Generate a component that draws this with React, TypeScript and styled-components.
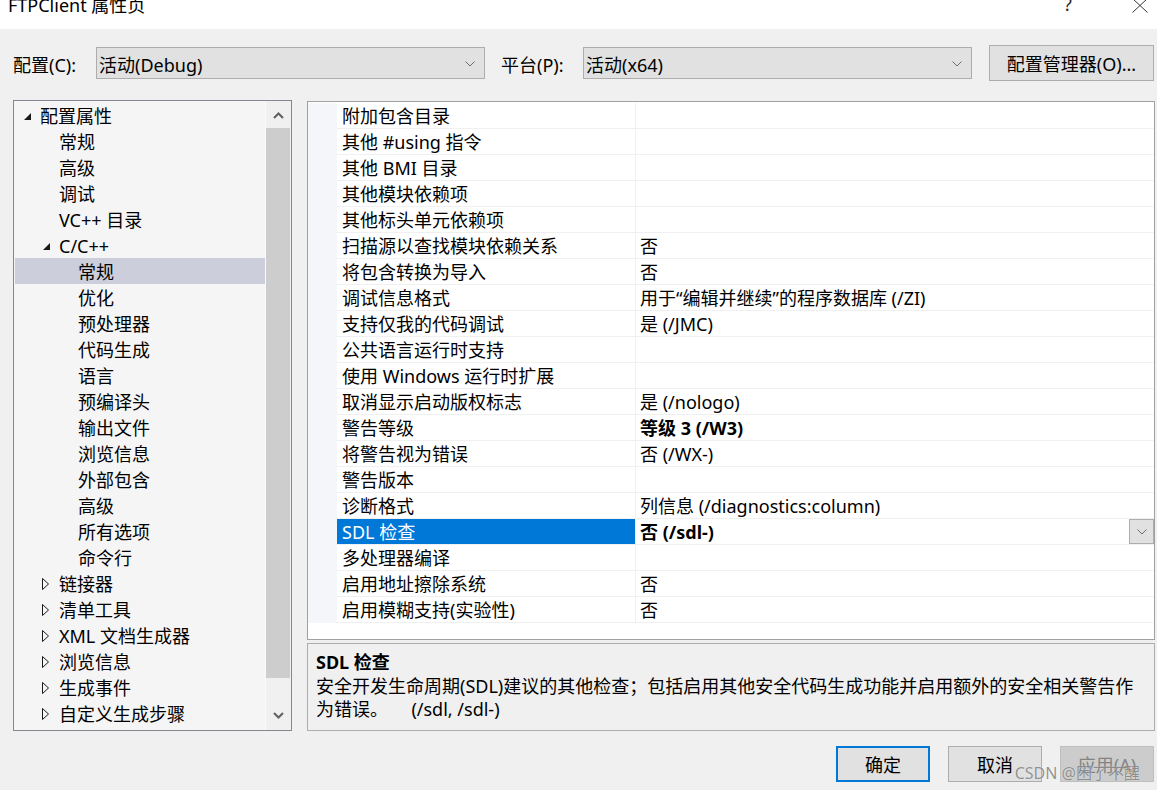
import React from 'react';
import styled, { createGlobalStyle } from 'styled-components';

const FONT = `"Noto Sans", "Noto Sans CJK SC", sans-serif`;

const Global = createGlobalStyle`
  html, body { margin: 0; padding: 0; background: #f0f0f0; }
  body { font-family: ${FONT}; font-size: 18px; color: #000; }
  * { box-sizing: border-box; }
`;

const Window = styled.div`
  position: relative;
  width: 1157px;
  height: 790px;
  overflow: hidden;
  background: #f0f0f0;
  display: flex;
  flex-direction: column;
`;

const TitleBar = styled.div`
  height: 29px;
  flex: none;
  background: #fff;
  display: flex;
  align-items: flex-start;
  padding-left: 8px;
  overflow: hidden;
`;

const Title = styled.div`
  flex: 1;
  font-size: 18px;
  line-height: 18px;
  margin-top: -4px;
  white-space: nowrap;
`;

const HelpGlyph = styled.div`
  font-size: 18px;
  line-height: 18px;
  margin-top: -5px;
  width: 12px;
  color: #222;
`;

const CloseGlyph = styled.div`
  margin-left: 56px;
  margin-right: 9px;
  margin-top: -2px;
  display: flex;
`;

const Content = styled.div`
  flex: 1;
  display: flex;
  flex-direction: column;
  padding: 0 2px 0 13px;
`;

const ConfigRow = styled.div`
  margin-top: 16px;
  height: 36px;
  display: flex;
  align-items: center;
`;

const Label = styled.div<{ $w: number; $ml?: number }>`
  width: ${p => p.$w}px;
  margin-left: ${p => p.$ml ?? 0}px;
  white-space: nowrap;
  flex: none;
  padding-top: 2px;
`;

const Combo = styled.div`
  width: 389px;
  height: 32px;
  flex: none;
  border: 1px solid #adadad;
  background: #e1e1e1;
  display: flex;
  align-items: center;
  padding-left: 2px;
  padding-top: 1px;
  white-space: nowrap;
`;

const ComboChevron = styled.span`
  margin-left: auto;
  margin-right: 9px;
  display: flex;
`;

const PushButton = styled.div<{ $w: number; $h: number; $default?: boolean; $disabled?: boolean }>`
  width: ${p => p.$w}px;
  height: ${p => p.$h}px;
  flex: none;
  display: flex;
  align-items: center;
  justify-content: center;
  white-space: nowrap;
  background: ${p => (p.$disabled ? '#cccccc' : '#e1e1e1')};
  border: ${p => (p.$default ? '2px solid #0078d7' : p.$disabled ? '1px solid #bfbfbf' : '1px solid #adadad')};
  color: ${p => (p.$disabled ? '#838383' : '#000')};
`;

const ManagerButton = styled(PushButton)`
  margin-left: 17px;
`;

const Main = styled.div`
  margin-top: 19px;
  height: 631px;
  display: flex;
  gap: 15px;
`;

const Tree = styled.div`
  width: 279px;
  flex: none;
  border: 1px solid #828790;
  background: #f5f5f5;
  display: flex;
`;

const TreeList = styled.div`
  flex: 1;
  padding: 1px 0 0 1px;
  overflow: hidden;
`;

const TreeRow = styled.div<{ $level: number; $selected?: boolean }>`
  height: 26px;
  display: flex;
  align-items: center;
  padding-left: ${p => 6 + 19 * p.$level}px;
  padding-top: 2px;
  background: ${p => (p.$selected ? '#cccedb' : 'transparent')};
  white-space: nowrap;
  line-height: 24px;
`;

const Expander = styled.span`
  width: 19px;
  flex: none;
  display: flex;
  align-items: center;
  padding-left: 2px;
`;

const ScrollBar = styled.div`
  width: 26px;
  flex: none;
  border-left: 1px solid #fafafa;
  background: #f0f0f0;
  display: flex;
  flex-direction: column;
`;

const ScrollArrow = styled.div<{ $h: number; $align: string }>`
  height: ${p => p.$h}px;
  flex: none;
  display: flex;
  justify-content: center;
  align-items: ${p => p.$align};
  padding: 11px 1px 10px 0;
`;

const ScrollThumb = styled.div`
  height: 550px;
  flex: none;
  background: #cdcdcd;
  margin-right: 1px;
`;

const RightColumn = styled.div`
  flex: 1;
  display: flex;
  flex-direction: column;
  gap: 3px;
`;

const Grid = styled.div`
  height: 539px;
  margin-top: 1px;
  border: 1px solid #a0a0a0;
  background: #fff;
  padding-top: 1px;
  overflow: hidden;
`;

const GridRow = styled.div`
  height: 26px;
  display: grid;
  grid-template-columns: 29px 299px 1fr;
`;

const MarginCell = styled.div`
  background: #f5f6f9;
`;

const NameCell = styled.div<{ $selected?: boolean }>`
  border-bottom: 1px solid #f0f0f0;
  border-right: 1px solid #f0f0f0;
  padding-left: 5px;
  padding-top: 2px;
  line-height: 23px;
  white-space: nowrap;
  overflow: hidden;
  background: ${p => (p.$selected ? '#0078d7' : 'transparent')};
  color: ${p => (p.$selected ? '#fff' : '#000')};
`;

const ValueCell = styled.div<{ $bold?: boolean }>`
  border-bottom: 1px solid #f0f0f0;
  padding-left: 4px;
  white-space: nowrap;
  display: flex;
  align-items: stretch;
  font-weight: ${p => (p.$bold ? 700 : 400)};
`;

const ValueText = styled.span`
  padding-top: 2px;
  line-height: 23px;
`;

const DropButton = styled.div`
  margin-left: auto;
  width: 25px;
  height: 25px;
  border: 1px solid #adadad;
  background: #e1e1e1;
  display: flex;
  align-items: center;
  justify-content: center;
`;

const Description = styled.div`
  height: 88px;
  border: 1px solid #adadad;
  background: #f0f0f0;
  padding: 5px 8px 0 8px;
`;

const DescTitle = styled.div`
  font-weight: 700;
  line-height: 26px;
`;

const DescLine = styled.div`
  line-height: 23px;
  white-space: pre;
`;

const ButtonRow = styled.div`
  margin-top: 15px;
  display: flex;
  justify-content: flex-end;
  gap: 18px;
  padding-right: 1px;
`;

const Watermark = styled.div`
  position: absolute;
  right: 17px;
  bottom: 7px;
  font-size: 16px;
  line-height: 20px;
  color: rgba(110, 110, 110, 0.75);
  text-shadow: 0 0 1px rgba(255, 255, 255, 0.8);
  white-space: nowrap;
  pointer-events: none;
`;

const SmallChevron = () => (
  <svg width="10" height="6" viewBox="0 0 10 6">
    <polyline points="0.5,0.5 5,5 9.5,0.5" fill="none" stroke="#6d6d6d" strokeWidth="1" />
  </svg>
);

const ExpandedTri = () => (
  <svg width="9" height="9" viewBox="0 0 9 9">
    <polygon points="8,1 8,8 1,8" fill="#1a1a1a" />
  </svg>
);

const CollapsedTri = () => (
  <svg width="8" height="12" viewBox="0 0 8 12">
    <polygon points="0.5,0.5 6.5,6 0.5,11.5" fill="none" stroke="#1a1a1a" strokeWidth="1" />
  </svg>
);

const ScrollChevron = ({ up }: { up?: boolean }) => (
  <svg width="11" height="7" viewBox="0 0 11 7">
    <polyline
      points={up ? '1,6 5.5,1.5 10,6' : '1,1 5.5,5.5 10,1'}
      fill="none"
      stroke="#606060"
      strokeWidth="2"
    />
  </svg>
);

type TreeItem = { label: string; level: number; exp?: 'open' | 'closed'; selected?: boolean };

const treeItems: TreeItem[] = [
  { label: '配置属性', level: 0, exp: 'open' },
  { label: '常规', level: 1 },
  { label: '高级', level: 1 },
  { label: '调试', level: 1 },
  { label: 'VC++ 目录', level: 1 },
  { label: 'C/C++', level: 1, exp: 'open' },
  { label: '常规', level: 2, selected: true },
  { label: '优化', level: 2 },
  { label: '预处理器', level: 2 },
  { label: '代码生成', level: 2 },
  { label: '语言', level: 2 },
  { label: '预编译头', level: 2 },
  { label: '输出文件', level: 2 },
  { label: '浏览信息', level: 2 },
  { label: '外部包含', level: 2 },
  { label: '高级', level: 2 },
  { label: '所有选项', level: 2 },
  { label: '命令行', level: 2 },
  { label: '链接器', level: 1, exp: 'closed' },
  { label: '清单工具', level: 1, exp: 'closed' },
  { label: 'XML 文档生成器', level: 1, exp: 'closed' },
  { label: '浏览信息', level: 1, exp: 'closed' },
  { label: '生成事件', level: 1, exp: 'closed' },
  { label: '自定义生成步骤', level: 1, exp: 'closed' },
];

type Prop = { name: string; value?: string; bold?: boolean; selected?: boolean };

const props: Prop[] = [
  { name: '附加包含目录' },
  { name: '其他 #using 指令' },
  { name: '其他 BMI 目录' },
  { name: '其他模块依赖项' },
  { name: '其他标头单元依赖项' },
  { name: '扫描源以查找模块依赖关系', value: '否' },
  { name: '将包含转换为导入', value: '否' },
  { name: '调试信息格式', value: '用于“编辑并继续”的程序数据库 (/ZI)' },
  { name: '支持仅我的代码调试', value: '是 (/JMC)' },
  { name: '公共语言运行时支持' },
  { name: '使用 Windows 运行时扩展' },
  { name: '取消显示启动版权标志', value: '是 (/nologo)' },
  { name: '警告等级', value: '等级 3 (/W3)', bold: true },
  { name: '将警告视为错误', value: '否 (/WX-)' },
  { name: '警告版本' },
  { name: '诊断格式', value: '列信息 (/diagnostics:column)' },
  { name: 'SDL 检查', value: '否 (/sdl-)', bold: true, selected: true },
  { name: '多处理器编译' },
  { name: '启用地址擦除系统', value: '否' },
  { name: '启用模糊支持(实验性)', value: '否' },
];

export default function App() {
  return (
    <Window>
      <Global />
      <TitleBar>
        <Title>FTPClient 属性页</Title>
        <HelpGlyph>?</HelpGlyph>
        <CloseGlyph>
          <svg width="16" height="15" viewBox="0 0 16 15">
            <line x1="0.5" y1="0.5" x2="15.5" y2="14.5" stroke="#333" strokeWidth="1" />
            <line x1="15.5" y1="0.5" x2="0.5" y2="14.5" stroke="#333" strokeWidth="1" />
          </svg>
        </CloseGlyph>
      </TitleBar>
      <Content>
        <ConfigRow>
          <Label $w={83}>配置(C):</Label>
          <Combo>
            活动(Debug)
            <ComboChevron>
              <SmallChevron />
            </ComboChevron>
          </Combo>
          <Label $w={82} $ml={16}>平台(P):</Label>
          <Combo>
            活动(x64)
            <ComboChevron>
              <SmallChevron />
            </ComboChevron>
          </Combo>
          <ManagerButton $w={165} $h={36}>配置管理器(O)...</ManagerButton>
        </ConfigRow>
        <Main>
          <Tree>
            <TreeList>
              {treeItems.map((t, i) => (
                <TreeRow key={i} $level={t.level} $selected={t.selected}>
                  <Expander>
                    {t.exp === 'open' && <ExpandedTri />}
                    {t.exp === 'closed' && <CollapsedTri />}
                  </Expander>
                  {t.label}
                </TreeRow>
              ))}
            </TreeList>
            <ScrollBar>
              <ScrollArrow $h={27} $align="center">
                <ScrollChevron up />
              </ScrollArrow>
              <ScrollThumb />
              <ScrollArrow $h={51} $align="flex-end">
                <ScrollChevron />
              </ScrollArrow>
            </ScrollBar>
          </Tree>
          <RightColumn>
            <Grid>
              {props.map((p, i) => (
                <GridRow key={i}>
                  <MarginCell />
                  <NameCell $selected={p.selected}>{p.name}</NameCell>
                  <ValueCell $bold={p.bold}>
                    <ValueText>{p.value ?? ''}</ValueText>
                    {p.selected && (
                      <DropButton>
                        <SmallChevron />
                      </DropButton>
                    )}
                  </ValueCell>
                </GridRow>
              ))}
            </Grid>
            <Description>
              <DescTitle>SDL 检查</DescTitle>
              <DescLine>安全开发生命周期(SDL)建议的其他检查；包括启用其他安全代码生成功能并启用额外的安全相关警告作</DescLine>
              <DescLine>为错误。     (/sdl, /sdl-)</DescLine>
            </Description>
          </RightColumn>
        </Main>
        <ButtonRow>
          <PushButton $w={94} $h={36} $default>确定</PushButton>
          <PushButton $w={94} $h={36}>取消</PushButton>
          <PushButton $w={94} $h={36} $disabled>应用(A)</PushButton>
        </ButtonRow>
      </Content>
      <Watermark>CSDN @困了不醒</Watermark>
    </Window>
  );
}
